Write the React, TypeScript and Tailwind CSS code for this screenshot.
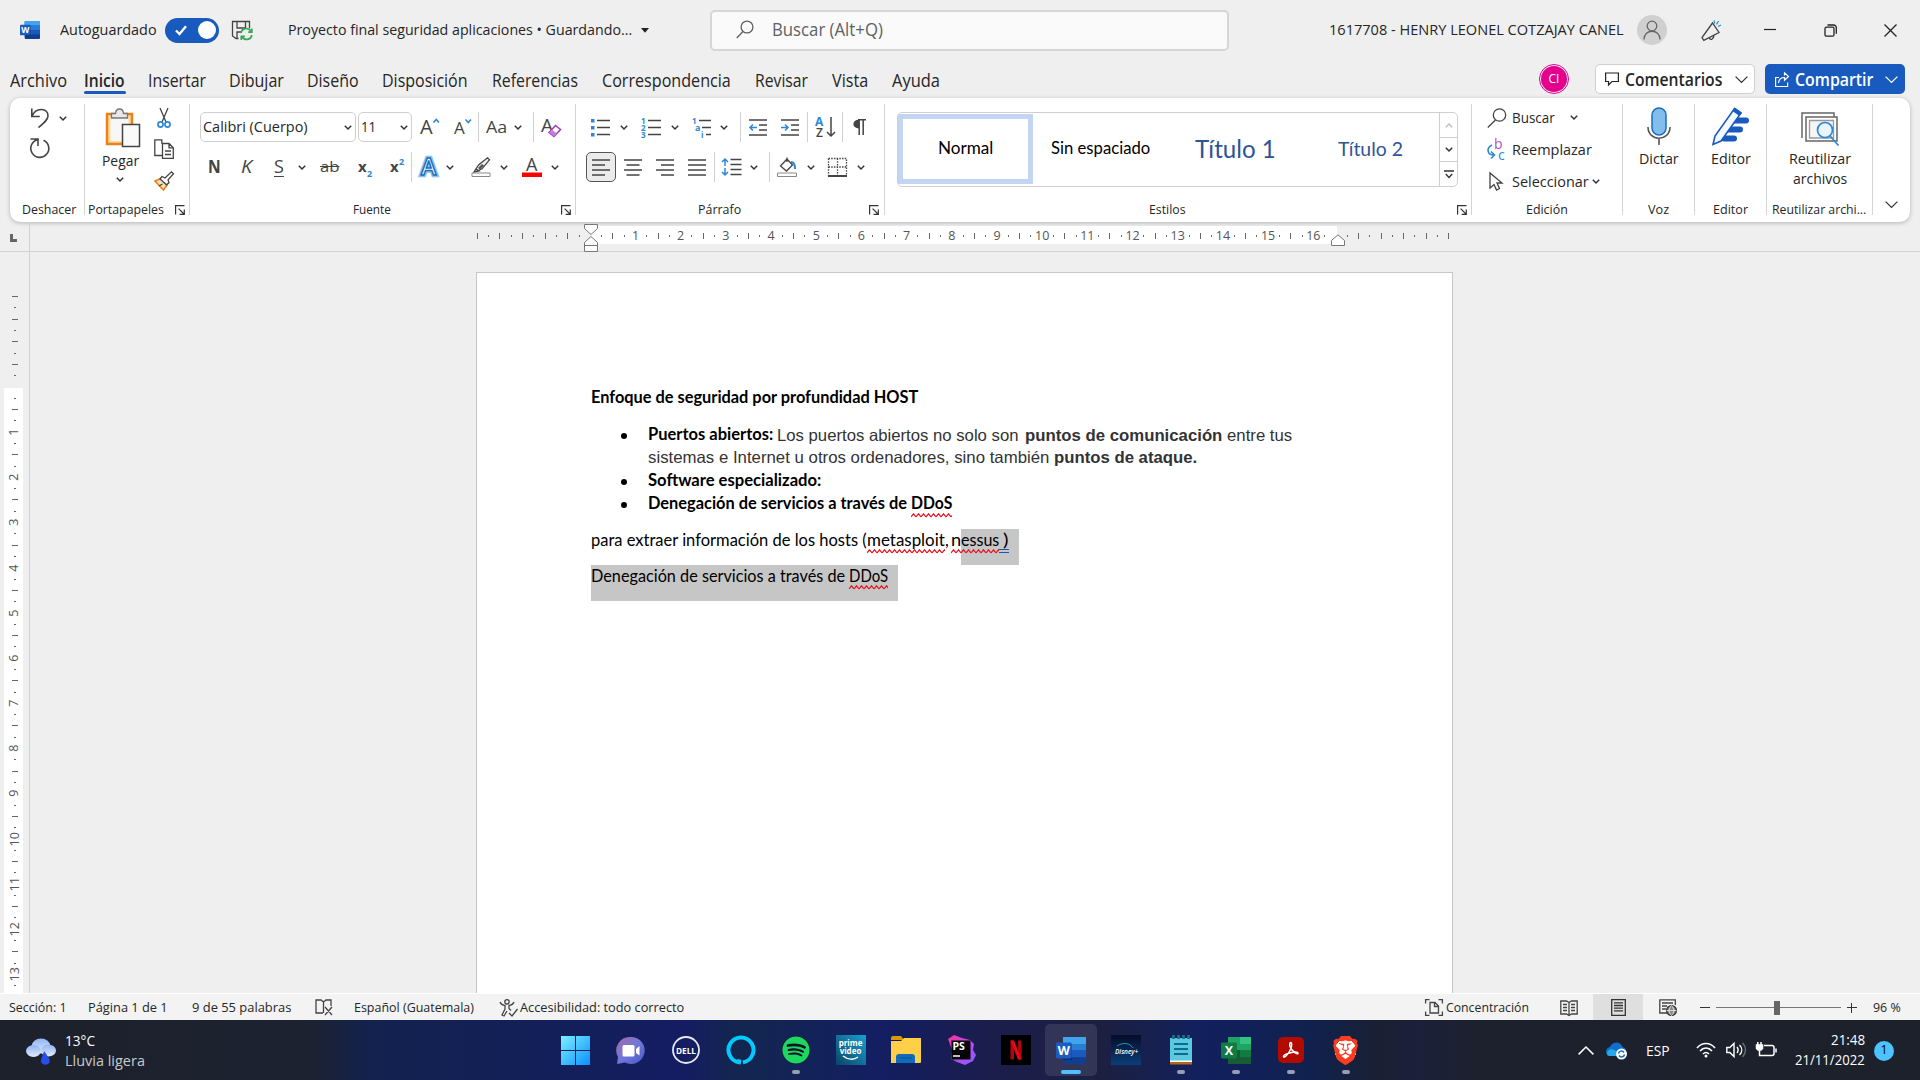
import React, { useLayoutEffect, useRef, useState } from "react";
import { FaSpotify } from "react-icons/fa";
import { SiBrave } from "react-icons/si";

type Kids = { children?: React.ReactNode };

/* One line of text, condensed or widened to fill the width its class gives. */
function T({ c, children }: { c: string } & Kids) {
  const box = useRef<HTMLSpanElement>(null);
  const inner = useRef<HTMLSpanElement>(null);
  const [k, setK] = useState(1);
  useLayoutEffect(() => {
    if (box.current && inner.current && inner.current.offsetWidth > 0) {
      const r = box.current.getBoundingClientRect().width / inner.current.offsetWidth;
      setK(r);
    }
  }, []);
  return (
    <span ref={box} className={"inline-flex shrink-0 items-center whitespace-pre leading-[1.3] " + c}>
      <span ref={inner} className="inline-block shrink-0 origin-left" style={{ transform: `scaleX(${k})` }}>
        {children}
      </span>
    </span>
  );
}

function Ic({ w, h, c = "", s = "#444", sw = 1.3, children }: { w: number; h: number; c?: string; s?: string; sw?: number } & Kids) {
  return (
    <svg width={w} height={h} viewBox={`0 0 ${w} ${h}`} className={"shrink-0 overflow-visible " + c} fill="none" stroke={s} strokeWidth={sw}>
      {children}
    </svg>
  );
}

const Chev = ({ c = "", s = "#333" }: { c?: string; s?: string }) => (
  <Ic w={8} h={5} c={c} s={s} sw={1.5}><path d="M.8.7 4 4 7.2.7" /></Ic>
);
const BigChev = ({ c = "", s = "#333" }: { c?: string; s?: string }) => (
  <Ic w={13} h={7} c={c} s={s} sw={1.3}><path d="M.6.6 6.5 6.4 12.4.6" /></Ic>
);
const Div = ({ c = "" }: { c?: string }) => <span className={"h-[30px] w-px shrink-0 bg-[#d0d0d0] " + c} />;
const Launcher = ({ c = "" }: { c?: string }) => (
  <Ic w={10} h={10} c={c} s="#333" sw={1.2}><path d="M.6 9.5V.6H9.5M3.6 3.6l5.4 5.4M9.3 4.6v4.8H4.6" /></Ic>
);

function Group({ c, label, lc, lt, launcher, children }: { c: string; label: string; lc: string; lt?: string; launcher?: string } & Kids) {
  return (
    <section className={"flex h-[111px] shrink-0 flex-col border-r border-[#d4d4d4] " + c}>
      <div className="h-[101px]">{children}</div>
      <div className="flex h-[10px] items-center">
        <T c={"text-[13.3px] " + lc + " " + (lt ?? "")}>{label}</T>
        {launcher && <Launcher c={launcher} />}
      </div>
    </section>
  );
}

const WordLogo = ({ size }: { size: number }) => (
  <svg width={size} height={size * 0.9} viewBox="0 0 30 27" className="shrink-0">
    <rect x="7" y="0" width="23" height="27" rx="1.5" fill="#103f91" />
    <path d="M7 0h23v7H7z" fill="#41a5ee" /><path d="M7 7h23v6.6H7z" fill="#2b7cd3" /><path d="M7 13.6h23v6.6H7z" fill="#185abd" />
    <path d="M7 6h9v17H7z" fill="#000" opacity=".25" />
    <rect x="0" y="5.5" width="15.5" height="16" rx="1.4" fill="#1b5cbe" />
    <text x="7.8" y="18" textAnchor="middle" fontSize="12.5" fontWeight="700" fill="#fff" fontFamily="Open Sans, sans-serif">W</text>
  </svg>
);

function TitleBar() {
  return (
    <header className="flex h-[60px] shrink-0 items-center text-[15px]">
      <span className="ml-5 flex"><WordLogo size={20} /></span>
      <T c="ml-5 w-[97px]">Autoguardado</T>
      <span className="ml-2 flex h-[25px] w-[54px] items-center justify-between rounded-full bg-[#185abd] pl-2.5 pr-[3px]">
        <Ic w={12} h={11} s="#fff" sw={2.3}><path d="M1 5.5 4.5 9 11 1.2" /></Ic>
        <i className="size-[18px] rounded-full bg-white" />
      </span>
      <Ic w={22} h={21} c="ml-3">
        <path d="M7.5 18.5H5L1.5 16V1.5h17V8M6 1.5v6.500h8.500V1.500M6 18v-6h4" />
        <path d="M10 13a5.300 5.300 0 0 1 10-1.500M20.800 8.500v3.600h-3.600M20.800 15a5.300 5.300 0 0 1-9.800 1.800M10.300 20v-3.600h3.600" stroke="#36a853" strokeWidth="1.7" />
      </Ic>
      <T c="ml-[35px] w-[344px]">Proyecto final seguridad aplicaciones • Guardando...</T>
      <svg width="8" height="5" className="ml-[9px] shrink-0"><path d="M0 0h8L4 4.800z" fill="#222" /></svg>
      <div className="ml-[61px] flex h-[41px] w-[519px] shrink-0 items-center rounded-[5px] border-2 border-[#d6d6d6] bg-[#fafafa] pb-[2px] text-[17.5px] text-[#616161]">
        <Ic w={18} h={19} c="ml-6" s="#616161"><circle cx="11" cy="7" r="5.900" /><path d="M7 11.500.8 18" /></Ic>
        <T c="ml-[18px] w-[111px]">Buscar (Alt+Q)</T>
      </div>
      <T c="ml-[100px] w-[295px]">1617708 - HENRY LEONEL COTZAJAY CANEL</T>
      <span className="ml-[13px] flex size-[30px] shrink-0 items-center justify-center rounded-full bg-[#d0d0d0]">
        <Ic w={18} h={20} s="#666"><circle cx="9" cy="6" r="4.800" /><path d="M1 19.500c0-11 16-11 16 0" /></Ic>
      </span>
      <Ic w={20} h={21} c="ml-[34px]">
        <path d="M11.500 3 1 17.500l1.800 2.800L18 12.500zM8.500 18c.5 2.300 4 2 4.500-2.600" />
        <path d="M13 .5l.8 3M17.500 1l-2 3.500M20 5l-3 1.500" stroke="#2b88d8" />
      </Ic>
      <Ic w={12} h={13} c="ml-[43px]" s="#222" sw={1.200}><path d="M0 5.500h12" /></Ic>
      <Ic w={13} h={13} c="ml-12" s="#222" sw={1.300}><rect x="1" y="3.200" width="9" height="9" rx="1.500" /><path d="M3.500 1h6a2.800 2.800 0 0 1 2.800 2.800v6" /></Ic>
      <Ic w={13} h={13} c="ml-[47px]" s="#222" sw={1.300}><path d="M.5.5l12 12M12.500.5l-12 12" /></Ic>
    </header>
  );
}

function Tabs() {
  return (
    <nav className="flex h-[38px] shrink-0 items-center text-[17.500px]">
      <T c="ml-[10px] mt-[2px] w-[57px]">Archivo</T>
      <span className="relative ml-[17px] mt-[2px] flex font-semibold">
        <T c="w-[41px]">Inicio</T>
        <i className="absolute -bottom-[3px] left-0 h-[3px] w-[42px] rounded-full bg-[#185abd]" />
      </span>
      <T c="ml-[23px] mt-[2px] w-[58px]">Insertar</T>
      <T c="ml-[23px] mt-[2px] w-[55px]">Dibujar</T>
      <T c="ml-[23px] mt-[2px] w-[52px]">Diseño</T>
      <T c="ml-[23px] mt-[2px] w-[86px]">Disposición</T>
      <T c="ml-[24px] mt-[2px] w-[86px]">Referencias</T>
      <T c="ml-[24px] mt-[2px] w-[129px]">Correspondencia</T>
      <T c="ml-[24px] mt-[2px] w-[53px]">Revisar</T>
      <T c="ml-[24px] mt-[2px] w-[36px]">Vista</T>
      <T c="ml-[24px] mt-[2px] w-[48px]">Ayuda</T>
      <span className="ml-[599px] flex size-[30px] shrink-0 items-center justify-center rounded-full border border-[#e3008c] p-px">
        <i className="flex size-full items-center justify-center rounded-full bg-[#e3008c] text-[12px] not-italic text-white">CI</i>
      </span>
      <div className="ml-[26px] flex h-[30px] w-[160px] shrink-0 items-center rounded-[5px] border border-[#cfcfcf] bg-white font-semibold">
        <Ic w={14} h={14} c="ml-[9px]" s="#222" sw={1.200}><path d="M.6 1h12.800v8.500H7L3.500 13V9.500H.6z" /></Ic>
        <T c="ml-[6px] w-[97px]">Comentarios</T>
        <BigChev c="ml-[13px]" />
      </div>
      <div className="ml-[10px] flex h-[30px] w-[140px] shrink-0 items-center rounded-[5px] bg-[#185abd] font-semibold text-white">
        <Ic w={14} h={15} c="ml-[10px]" s="#fff" sw={1.200}><path d="M4 5.500H.6v9h12v-4M3.500 11c.5-4 3-5.500 6-5.500V8.300L13.500 4.500 9.500.8v2.700" /></Ic>
        <T c="ml-[6px] w-[78px]">Compartir</T>
        <BigChev c="ml-[12px]" s="#fff" />
      </div>
    </nav>
  );
}

const aText = (x: number, y: number, size: number, t: string, fill: string, extra: object = {}) => (
  <text x={x} y={y} fontSize={size} fill={fill} stroke="none" fontFamily="Open Sans, sans-serif" {...extra}>{t}</text>
);

function Ribbon() {
  return (
    <div className="mx-[10px] flex h-[124px] shrink-0 rounded-[10px] bg-white pt-[6px] shadow-[0_1px_4px_rgba(0,0,0,0.25)]">
      <Group c="w-[75px]" label="Deshacer" lc="ml-[12px] w-[54px]">
        <div className="flex flex-col pt-[2px]">
          <div className="flex h-6 items-center">
            <Ic w={18} h={20} c="ml-[21px]" sw={1.600}><path d="M.8.5v8h8M1 8.300C5-1.500 17.500 0 17 8c-.2 4-4 7-9.500 11.500" /></Ic>
            <Chev c="ml-[10px]" />
          </div>
          <Ic w={20} h={21} c="ml-[20px] mt-[8px]" sw={1.600}><path d="M.5 1H8v7M13.500 2.200a9 9 0 1 1-6-.5" /></Ic>
        </div>
      </Group>
      <Group c="w-[105px]" label="Portapapeles" lc="ml-[3px] w-[76px]" launcher="ml-[11px]">
        <div className="flex pt-[4px]">
          <div className="ml-[15px] flex w-[40px] flex-col items-center">
            <Ic w={35} h={39} c="ml-[4px]">
              <path d="M2 6h25v30H2z" fill="#fbd993" stroke="#e8821e" strokeWidth="2.500" />
              <path d="M5.500 9h18v24h-18z" fill="#f7f7f7" stroke="none" />
              <path d="M6.500 10V5.500h4C11-.5 18-.5 18.500 5.500h4V10z" fill="#e8e8e8" stroke="#777" />
              <path d="M17.500 16.500h17v22h-17z" fill="#fafafa" stroke="#444" strokeWidth="1.500" />
            </Ic>
            <T c="mt-[4px] w-[37px] text-[15px]">Pegar</T>
            <Chev c="mt-[6px]" />
          </div>
          <div className="ml-[14px] flex flex-col items-center">
            <Ic w={14} h={20}><path d="M3 0l6 14M11 0 5 14" /><circle cx="3.500" cy="16.500" r="2.600" stroke="#2b88d8" strokeWidth="1.600" /><circle cx="10.500" cy="16.500" r="2.600" stroke="#2b88d8" strokeWidth="1.600" /></Ic>
            <Ic w={20} h={20} c="mt-[11px]"><path d="M8.500 16.500H.8V.8h7v4" fill="none" /><path d="M8.500 4.500h6.500l4.300 4.300v10.500H8.500zM15 4.500v4.300h4.300M11 12h6M11 15.500h6" /></Ic>
            <Ic w={20} h={20} c="mt-[12px]"><path d="M1 10l6-2.500 6 6.500L9.500 19z" fill="#fde3b8" stroke="#e8821e" strokeWidth="1.600" /><path d="M5 15l3.500-2M6 8l2-2.500 3 1.500L17.500.8l2 2-5.500 6 1 3-2.500 2z" fill="#fff" stroke="#444" /></Ic>
          </div>
        </div>
      </Group>

      <Group c="w-[386px]" label="Fuente" lc="ml-[163px] w-[38px]" launcher="ml-[170px]">
        <div className="flex flex-col gap-[10px] pt-[8px]">
          <div className="flex h-[30px] items-center text-[15px]">
            <span className="ml-[10px] flex h-[30px] w-[156px] shrink-0 items-center rounded-[5px] border border-[#cfcfcf]">
              <T c="ml-[2px] w-[105px]">Calibri (Cuerpo)</T><Chev c="ml-[36px]" />
            </span>
            <span className="ml-[2px] flex h-[30px] w-[54px] shrink-0 items-center rounded-[5px] border border-[#cfcfcf]">
              <T c="ml-[2px] w-[15px]">11</T><Chev c="ml-[24px]" />
            </span>
            <Ic w={20} h={20} c="ml-[8px]">{aText(0, 17, 20, "A", "#444")}<path d="M13.500 5.500 16.300 2.500 19 5.500" stroke="#2b88d8" strokeWidth="1.600" /></Ic>
            <Ic w={18} h={20} c="ml-[14px]">{aText(0, 17, 17, "A", "#444")}<path d="M11.500 2.500 14.300 5.500 17 2.500" stroke="#2b88d8" strokeWidth="1.600" /></Ic>
            <Div c="ml-[6px]" />
            <T c="ml-[7px] w-[21px] text-[17px] text-[#444]">Aa</T>
            <Chev c="ml-[7px]" />
            <Div c="ml-[11px]" />
            <Ic w={20} h={20} c="ml-[7px]">{aText(0, 15, 19, "A", "#444")}<path d="M8 15.500 14.500 8.500l5 4-6.500 7z" fill="#fff" stroke="#9b3fb5" strokeWidth="1.600" /><path d="M8 15.500l3-3 4.700 4-2.700 3z" fill="#c77ddb" stroke="none" /></Ic>
          </div>
          <div className="flex h-[30px] items-center text-[#444]">
            <T c="ml-[18px] w-[13px] text-[18px] font-bold">N</T>
            <T c="ml-[20px] w-[11px] text-[18px] italic">K</T>
            <T c="ml-[22px] w-[10px] text-[18px] underline underline-offset-3 decoration-1">S</T>
            <Chev c="ml-[14px]" />
            <T c="ml-[14px] w-[20px] text-[15px] line-through">ab</T>
            <Ic w={14} h={22} c="ml-[18px]">{aText(0, 16, 15, "x", "#444", { fontWeight: 700 })}{aText(9, 21, 9, "2", "#2b88d8", { fontWeight: 700 })}</Ic>
            <Ic w={14} h={22} c="ml-[18px]">{aText(0, 16, 15, "x", "#444", { fontWeight: 700 })}{aText(9, 9, 9, "2", "#2b88d8", { fontWeight: 700 })}</Ic>
            <Div c="ml-[7px]" />
            <Ic w={19} h={20} c="ml-[8px]">{aText(1, 18, 23, "A", "#fff", { fontWeight: 600, stroke: "#8cc2ee", strokeWidth: 4.500 })}{aText(1, 18, 23, "A", "#fff", { fontWeight: 600, stroke: "#1a6fbf", strokeWidth: 1.500 })}</Ic>
            <Chev c="ml-[7px]" />
            <Ic w={20} h={20} c="ml-[17px]"><path d="M5 12l2.500-4L16.500.8l2 2-7.500 9-4 2zM5 12l3 2-5 1z" fill="#eee" /><path d="M7 11l4-4 2 1.500-4 4z" fill="#555" stroke="none" /><path d="M1 16h18v3.500H1z" stroke="#888" strokeWidth="1" fill="#fff" /></Ic>
            <Chev c="ml-[9px]" />
            <Ic w={20} h={20} c="ml-[14px]">{aText(4, 13.500, 18, "A", "#444")}<path d="M0 15.500h20v4.500H0z" fill="#f00" stroke="none" /></Ic>
            <Chev c="ml-[9px]" />
          </div>
        </div>
      </Group>

      <Group c="w-[309px]" label="Párrafo" lc="ml-[122px] w-[43px]" launcher="ml-[128px]">
        <div className="flex flex-col gap-[10px] pt-[8px]">
          <div className="flex h-[30px] items-center">
            <Ic w={20} h={19} c="ml-[14px]" sw={1.500}><path d="M7 2.500h13M7 9.500h13M7 16.500h13" /><path d="M1 1h3.500v3.500H1zM1 8h3.500v3.500H1zM1 15h3.500v3.500H1z" fill="#2b88d8" stroke="none" /></Ic>
            <Chev c="ml-[10px]" />
            <Ic w={20} h={19} c="ml-[13px]" sw={1.500}><path d="M7 2.500h13M7 9.500h13M7 16.500h13" />{aText(0, 5.500, 8, "1", "#2b88d8", { fontWeight: 700 })}{aText(0, 12.500, 8, "2", "#2b88d8", { fontWeight: 700 })}{aText(0, 19.500, 8, "3", "#2b88d8", { fontWeight: 700 })}</Ic>
            <Chev c="ml-[10px]" />
            <Ic w={20} h={19} c="ml-[13px]" sw={1.500}><path d="M7 2.500h12M10 9.500h9M14 16.500h5" />{aText(0, 5.500, 8, "1", "#2b88d8", { fontWeight: 700 })}{aText(3, 12.500, 9, "a", "#2b88d8", { fontWeight: 700 })}{aText(9, 19.500, 8, "i", "#2b88d8", { fontWeight: 700 })}</Ic>
            <Chev c="ml-[8px]" />
            <Div c="ml-[12px]" />
            <Ic w={18} h={17} c="ml-[8px]" sw={1.500}><path d="M0 1h18M10 6h8M10 11h8M0 16h18" /><path d="M8 8.500H1M4 5.500l-3 3 3 3" stroke="#2b88d8" /></Ic>
            <Ic w={18} h={17} c="ml-[14px]" sw={1.500}><path d="M0 1h18M10 6h8M10 11h8M0 16h18" /><path d="M0 8.500h7M4 5.500l3 3-3 3" stroke="#2b88d8" /></Ic>
            <Div c="ml-[8px]" />
            <Ic w={21} h={20} c="ml-[7px]" sw={1.500}>{aText(0, 8.500, 12, "A", "#2b88d8", { fontWeight: 700 })}{aText(1, 20, 12, "Z", "#444", { fontWeight: 600 })}<path d="M16 0v19M12 15l4 4 4-4" /></Ic>
            <Div c="ml-[6px]" />
            <Ic w={13} h={17} c="ml-[10px]" sw={1.500}><path d="M6 9.500C-1.500 9.500-1.500.8 6 .8z" fill="#444" stroke="none" /><path d="M5 .8h8M6.200.8V16M10.200.8V16" /></Ic>
          </div>
          <div className="flex h-[30px] items-center">
            <span className="ml-[10px] flex size-[30px] shrink-0 items-center justify-center rounded-[5px] border border-[#555] bg-[#ebebeb]">
              <Ic w={18} h={17} sw={1.500}><path d="M0 1h18M0 6h13M0 11h18M0 16h13" /></Ic>
            </span>
            <Ic w={18} h={17} c="ml-[8px]" sw={1.500}><path d="M0 1h18M2.500 6h13M0 11h18M2.500 16h13" /></Ic>
            <Ic w={18} h={17} c="ml-[14px]" sw={1.500}><path d="M0 1h18M5 6h13M0 11h18M5 16h13" /></Ic>
            <Ic w={18} h={17} c="ml-[14px]" sw={1.500}><path d="M0 1h18M0 6h18M0 11h18M0 16h18" /></Ic>
            <Div c="ml-[8px]" />
            <Ic w={21} h={18} c="ml-[6px]" sw={1.500}><path d="M9.500 1.500h11M9.500 6.500h11M9.500 11.500h11M9.500 16.500h11" /><path d="M4 1v7M1 4l3-3 3 3M4 10v7M1 14l3 3 3-3" stroke="#2b88d8" /></Ic>
            <Chev c="ml-[8px]" />
            <Div c="ml-[11px]" />
            <Ic w={20} h={20} c="ml-[7px]"><path d="M3.500 9 10 2l5.500 6-6 6zM10 5V.5" fill="#fff" /><path d="M14 5c3 0 4 3 4 7" stroke="#2b88d8" strokeWidth="2" /><path d="M.5 16h19v3.500H.5z" stroke="#888" strokeWidth="1" /></Ic>
            <Chev c="ml-[10px]" />
            <Ic w={19} h={19} c="ml-[13px]"><path d="M.5.5h18v17M.5.5v17M9.500.5v17M.5 9h18" strokeDasharray="1.500 1.200" /><path d="M0 18h19" strokeWidth="2" /></Ic>
            <Chev c="ml-[10px]" />
          </div>
        </div>
      </Group>

      <Group c="w-[587px]" label="Estilos" lc="ml-[264px] w-[37px]" launcher="ml-[271px]">
        <div className="ml-[12px] mt-[8px] flex h-[75px] w-[561px] rounded-[5px] border border-[#cfcfcf] font-['Lato'] text-black">
          <div className="mt-px flex h-[70px] w-[135px] items-center justify-center border-[5px] border-[#c4d5f3]"><T c="w-[55px] text-[16.500px]">Normal</T></div>
          <div className="flex w-[135px] items-center justify-center pb-px"><T c="w-[99px] text-[16.500px]">Sin espaciado</T></div>
          <div className="flex w-[135px] items-center justify-center pb-[3px] pr-px text-[#2f5496]"><T c="w-[81px] text-[25px]">Título 1</T></div>
          <div className="flex w-[135px] items-center justify-center pb-[3px] pr-px text-[#2f5496]"><T c="w-[65px] text-[20px]">Título 2</T></div>
          <div className="ml-auto flex w-[18px] flex-col border-l border-[#cfcfcf]">
            <span className="flex h-[25px] items-center justify-center border-b border-[#cfcfcf]"><Ic w={8} h={5} s="#bbb"><path d="M.8 4.300 4 1l3.200 3.300" /></Ic></span>
            <span className="flex h-6 items-center justify-center border-b border-[#cfcfcf]"><Chev /></span>
            <span className="flex h-6 items-center justify-center"><Ic w={10} h={9} s="#333" sw={1.400}><path d="M0 1h10M1.800 4 5 7.500 8.200 4" /></Ic></span>
          </div>
        </div>
      </Group>

      <Group c="w-[151px]" label="Edición" lc="ml-[54px] w-[42px]">
        <div className="flex flex-col text-[15px]">
          <div className="flex h-[27px] items-center">
            <Ic w={20} h={20} c="ml-[15px]"><circle cx="12.500" cy="7" r="6.200" /><path d="M8.500 12 .8 19.500" /></Ic>
            <T c="ml-[5px] w-[43px]">Buscar</T><Chev c="ml-[15px]" />
          </div>
          <div className="flex h-[37px] items-center">
            <Ic w={18} h={20} c="ml-[15px]" sw={1.600}>{aText(7, 9, 14, "b", "#b14ec4")}{aText(11, 20, 14, "c", "#2b88d8")}<path d="M5 5C-1 8 0 15 7 15M4 11.500 7.500 15 4 18.500" stroke="#2b88d8" /></Ic>
            <T c="ml-[7px] w-[80px]">Reemplazar</T>
          </div>
          <div className="flex h-[27px] items-center">
            <Ic w={14} h={19} c="ml-[17px]"><path d="M1 1v15l4-3.500L7.500 18l3-1.500L8 11h5z" /></Ic>
            <T c="ml-[9px] w-[77px]">Seleccionar</T><Chev c="ml-[3px]" />
          </div>
        </div>
      </Group>

      <Group c="w-[72px]" label="Voz" lc="ml-[25px] w-[21px]">
        <div className="flex flex-col items-center pt-[3px]">
          <Ic w={24} h={38}><rect x="5" y="1" width="14" height="27" rx="7" fill="#83bdeb" stroke="#1a6fbf" strokeWidth="1.500" /><path d="M1 20c0 15 22 15 22 0M12 31.500V38" stroke="#555" strokeWidth="1.600" /></Ic>
          <T c="mt-[4px] w-[40px] text-[15px]">Dictar</T>
        </div>
      </Group>
      <Group c="w-[72px]" label="Editor" lc="ml-[18px] w-[35px]">
        <div className="flex flex-col items-center pt-[3px]">
          <Ic w={38} h={38}>
            <path d="M20 13.500h14M15 22.500h13M12 31.500h10" stroke="#185abd" strokeWidth="6" strokeLinecap="round" />
            <path d="M22.500 1.500l6.500 4.500L9 34 1 37.500 3 29z" fill="#f4f8ff" stroke="#185abd" strokeWidth="1.600" />
            <path d="M20.500 4 23 .8l7 5L27.500 9z" fill="#185abd" stroke="none" />
          </Ic>
          <T c="mt-[4px] w-[40px] text-[15px]">Editor</T>
        </div>
      </Group>
      <Group c="w-[106px]" label="Reutilizar archi..." lc="ml-[5px] w-[94px]">
        <div className="flex flex-col items-center pt-[8px]">
          <Ic w={38} h={34}>
            <path d="M1 26V1h32v4M5 29V5h31v24z" stroke="#666" strokeWidth="1.500" /><path d="M8.500 8.500h24V26h-24z" fill="#f5f5f5" stroke="#999" />
            <circle cx="24" cy="18" r="7.500" fill="#eaf4fd" stroke="#2b88d8" strokeWidth="1.700" /><path d="M29 24l8.500 9.500" stroke="#2b88d8" strokeWidth="1.700" />
          </Ic>
          <T c="mt-[3px] w-[62px] text-[15px]">Reutilizar</T>
          <T c="w-[54px] text-[15px]">archivos</T>
        </div>
      </Group>
      <BigChev c="ml-[12px] mt-[97px]" />
    </div>
  );
}

const quarter = (from: number, count: number) => Array.from({ length: count }, (_, i) => from + i);

function HRuler() {
  return (
    <div className="flex h-[30px] shrink-0 border-b border-[#d2d2d2]">
      <div className="w-[30px] shrink-0 border-r border-[#d2d2d2] pl-[10px] pt-[12px]">
        <i className="block h-[8px] w-[7px] border-b-[3px] border-l-[3px] border-[#666]" />
      </div>
      <div className="relative mt-[4px] h-[18px] w-full">
        <i className="absolute left-[561px] top-0 h-full w-[746px] bg-white" />
        <div className="relative ml-[441.700px] flex h-full items-center pt-[2px] text-[12.500px] text-[#555]">
          {quarter(-10, 87).map((q) => (
            <span key={q} className="flex h-full w-[11.300px] shrink-0 items-center justify-center">
              {q > 0 && q < 66 && q % 4 === 0 ? <b className="font-normal leading-none">{q / 4}</b>
                : q === 0 || q === 66 ? null
                : q % 2 === 0 ? <i className="h-[6px] w-px bg-[#666]" /> : <i className="h-[2px] w-px bg-[#666]" />}
            </span>
          ))}
        </div>
        <svg width="14" height="28" className="absolute left-[554px] -top-[2px]" fill="#fff" stroke="#777">
          <path d="M.5.500h13v4L7 10.500.5 4.500zM.500 27.500v-9L7 12.500l6.500 6v9zM.500 21.500h13" />
        </svg>
        <svg width="14" height="12" className="absolute left-[1301px] top-[8px]" fill="#fff" stroke="#777">
          <path d="M.5 11.500v-5L7 .8l6.500 5.700v5z" />
        </svg>
      </div>
    </div>
  );
}

function VRuler() {
  return (
    <div className="relative h-full w-[30px] shrink-0 overflow-hidden border-r border-[#d2d2d2]">
      <i className="absolute left-[4px] top-[136px] h-[605px] w-[19px] bg-white" />
      <div className="relative ml-[4px] flex w-[22px] flex-col pt-[39px] text-[12.500px] text-[#555]">
        {quarter(-8, 62).map((q) => (
          <span key={q} className="flex h-[11.300px] w-full shrink-0 items-center justify-center">
            {q > 0 && q % 4 === 0 ? <b className="-rotate-90 font-normal leading-none">{q / 4}</b>
              : q === 0 ? null
              : q % 2 === 0 ? <i className="h-px w-[6px] bg-[#666]" /> : <i className="h-px w-[2px] bg-[#666]" />}
          </span>
        ))}
      </div>
    </div>
  );
}

const Misspelt = ({ c, children }: { c: string } & Kids) => (
  <span className="relative flex">
    <T c={c}>{children}</T>
    <svg className="absolute bottom-[-3px] left-0 h-[5px] w-full">
      <defs><pattern id="zig" width="5" height="5" patternUnits="userSpaceOnUse"><path d="M0 4 2.500.8 5 4" fill="none" stroke="#e8121d" strokeWidth="1.200" /></pattern></defs>
      <rect width="100%" height="5" fill="url(#zig)" />
    </svg>
  </span>
);

const Bullet = () => <i className="ml-[30px] mr-[21px] mt-[2px] size-[6px] shrink-0 rounded-full bg-black" />;

function Page() {
  return (
    <article className="ml-[446px] mt-[20px] w-[977px] border border-b-0 border-[#c6c6c6] bg-white pl-[114px] pt-[113px] font-['Lato'] text-[16.500px] text-black">
      <h1 className="flex h-6 items-center font-bold"><T c="w-[327px]">Enfoque de seguridad por profundidad HOST</T></h1>
      <div className="mt-[13px] flex h-6 items-center">
        <Bullet /><T c="w-[125px] font-bold">Puertos abiertos:</T>
        <span className="flex pt-[2px] font-['Liberation_Sans'] text-[16.500px] text-[#333]">
          <T c="ml-[4px] w-[242px]">Los puertos abiertos no solo son</T>
          <T c="ml-[6px] w-[197px] font-bold">puntos de comunicación</T>
          <T c="ml-[5px] w-[65px]">entre tus</T>
        </span>
      </div>
      <div className="flex h-[22px] items-center pl-[57px] font-['Liberation_Sans'] text-[16.500px] text-[#333]">
        <T c="w-[401px]">sistemas e Internet u otros ordenadores, sino también</T>
        <T c="ml-[5px] w-[143px] font-bold">puntos de ataque.</T>
      </div>
      <div className="flex h-[23px] items-center font-bold"><Bullet /><T c="w-[173px]">Software especializado:</T></div>
      <div className="flex h-6 items-center font-bold">
        <Bullet /><T c="w-[259px]">Denegación de servicios a través de</T><span className="w-[4px]" /><Misspelt c="w-[41px]">DDoS</Misspelt>
      </div>
      <div className="mt-[13px] flex h-9">
        <div className="flex h-[23px] items-center">
          <T c="w-[276px]">para extraer información de los hosts (</T>
          <Misspelt c="w-[78px]">metasploit</Misspelt>
          <T c="mr-[2px] w-[4px]">,</T>
          <Misspelt c="w-[10px]">n</Misspelt>
        </div>
        <div className="h-9 w-[58px] bg-[#c6c6c6]">
          <div className="flex h-[23px] items-center">
            <Misspelt c="w-[38px]">essus</Misspelt>
            <span className="relative ml-[4px] flex"><T c="w-[5px]">)</T><i className="absolute -bottom-[2px] -left-[4px] h-[4px] w-[10px] border-y border-[#1f55b5]" /></span>
          </div>
        </div>
      </div>
      <div className="h-9 w-[307px] bg-[#c6c6c6]">
        <div className="flex h-[23px] items-center">
          <T c="mr-[4px] w-[254px]">Denegación de servicios a través de</T><Misspelt c="w-[39px]">DDoS</Misspelt>
        </div>
      </div>
    </article>
  );
}

function StatusBar() {
  return (
    <footer className="flex h-[27px] shrink-0 items-center border-t border-white bg-[#f3f3f3] pt-px text-[13.300px]">
      <T c="ml-[9px] w-[58px]">Sección: 1</T>
      <T c="ml-[21px] w-[80px]">Página 1 de 1</T>
      <T c="ml-[24px] w-[99px]">9 de 55 palabras</T>
      <Ic w={18} h={17} c="ml-[24px]"><path d="M8 14H1V1h5l2.500 2v11M8.500 3 11 1h5v6M10 8l7 8M17 8l-7 8" /></Ic>
      <T c="ml-[21px] w-[120px]">Español (Guatemala)</T>
      <Ic w={19} h={18} c="ml-[25px]"><circle cx="8" cy="2.800" r="2.200" /><path d="M1 3c1 3 3 3 5 3.500V10l-3 6 2 1 3-5M15 3c-1 3-3 3-5 3.500v3l2 2M10 14l3 3 5.500-7" /></Ic>
      <T c="ml-[2px] w-[164px]">Accesibilidad: todo correcto</T>
      <Ic w={18} h={17} c="ml-[741px]"><path d="M4.500.6H.6v4M13.500.6h3.900v4M4.500 16.400H.6v-4M13.500 16.400h3.900v-4M5 3.500h5l3.500 3.500v7H5zM9.500 3.500V7.500h4" /></Ic>
      <T c="ml-[3px] w-[83px]">Concentración</T>
      <Ic w={18} h={16} c="ml-[31px]"><path d="M9 2.500 6.500 1H.8v13h5.700L9 15.500l2.500-1.500h5.700V1h-5.700zM9 2.500v13M3 4.500h4M3 7.500h4M3 10.500h4M11 4.500h4M11 7.500h4M11 10.500h4" /></Ic>
      <span className="-mt-px ml-[15px] flex h-[26px] w-[50px] shrink-0 items-center justify-center bg-[#dfdfdf]">
        <Ic w={15} h={17} s="#333"><path d="M.7.7h13.600v15.600H.7zM3 3.800h9M3 6.500h9M3 9.200h9M3 11.900h9" /></Ic>
      </span>
      <Ic w={19} h={17} c="ml-[16px]"><path d="M8 14H.8V.8h15.500V6M3 4h11M3 7h5M3 10h4" /><circle cx="12.500" cy="11.500" r="4.900" fill="#888" stroke="#333" /><path d="M7.500 11.500h10M12.500 6.500c-3 3-3 7 0 10 3-3 3-7 0-10" stroke="#eee" strokeWidth=".8" /></Ic>
      <i className="ml-[22px] h-px w-[10px] shrink-0 bg-[#333]" />
      <span className="ml-[6px] flex w-[125px] shrink-0 items-center"><i className="h-px w-[58px] bg-[#777]" /><i className="h-[14px] w-[6px] bg-[#666]" /><i className="h-px w-[61px] bg-[#777]" /></span>
      <Ic w={10} h={10} c="ml-[6px]" s="#333" sw={1}><path d="M0 4.500h10M4.500 0v10" /></Ic>
      <T c="ml-[16px] w-[28px]">96 %</T>
    </footer>
  );
}

function App({ on, open, children }: { on?: boolean; open?: boolean } & Kids) {
  return (
    <div className="flex w-[55px] shrink-0 justify-center">
      <div className={"relative flex size-[50px] items-center justify-center rounded-[4px] " + (on ? "bg-white/10 ring-1 ring-white/10" : "")}>
        {children}
        {open && <i className="absolute bottom-px h-[4px] w-[8px] rounded-full bg-[#9a9db0]" />}
        {on && <i className="absolute bottom-px h-[4px] w-[20px] rounded-full bg-[#4cc2ff]" />}
      </div>
    </div>
  );
}

function Taskbar() {
  return (
    <div className="flex h-[60px] shrink-0 items-center bg-[linear-gradient(90deg,#1c212b_0,#1c2230_310px,#13224f_370px,#131f5c_600px,#151c63_680px,#13264f_735px,#131f62_880px,#1b1d4c_990px,#1c2040_1100px,#12205e_1200px,#10214f_1310px,#1a2032_1380px,#1b1f3a_1410px,#1c212e_1480px,#1c212b_1920px)] text-white">
      <Ic w={24} h={28} c="ml-[26px] mt-[4px]" s="none">
        <defs><linearGradient id="cl" x1="0" y1="0" x2="0" y2="1"><stop offset="0" stopColor="#8fb4f5" /><stop offset="1" stopColor="#e4ebfa" /></linearGradient></defs>
        <g transform="scale(1.250 1)"><circle cx="12" cy="8" r="7.500" fill="url(#cl)" /><circle cx="6" cy="13" r="6" fill="url(#cl)" /><circle cx="18" cy="12.500" r="6" fill="url(#cl)" /><path d="M14.500 13c-1.500 5-2.500 8-2.500 10 0 5 7 5 7 0 0-3-2.500-6-4.500-10z" fill="#2850e8" /></g>
      </Ic>
      <div className="ml-[15px] flex h-full w-[483px] shrink-0 flex-col pt-[11px] text-[15px] leading-none">
        <T c="h-[20px] w-[30px]">13°C</T>
        <T c="h-[20px] w-[80px] text-[#c8cad0]">Lluvia ligera</T>
      </div>
      <App><svg width="29" height="29"><defs><linearGradient id="wn" x1="0" y1="0" x2="1" y2="1"><stop stopColor="#7bf0ff" /><stop offset="1" stopColor="#0a90ff" /></linearGradient></defs><path d="M0 0h14v14H0zM15 0h14v14H15zM0 15h14v14H0zM15 15h14v14H15z" fill="url(#wn)" /></svg></App>
      <App><svg width="29" height="29"><defs><linearGradient id="ch" x1="0" y1="0" x2="1" y2="1"><stop stopColor="#a868a8" /><stop offset=".5" stopColor="#7078d8" /><stop offset="1" stopColor="#4858c8" /></linearGradient></defs><path d="M15 1a13.500 13.500 0 1 1-6 25.500L1 28l1-7A13.500 13.500 0 0 1 15 1z" fill="url(#ch)" /><rect x="6.500" y="9" width="12" height="11.500" rx="1.500" fill="#fff" /><path d="M20 13l3.500-3v9.500L20 17z" fill="#fff" /></svg></App>
      <App><svg width="28" height="28"><circle cx="14" cy="14" r="13" fill="none" stroke="#e8e8f0" strokeWidth="1.800" /><text x="14" y="17.500" textAnchor="middle" fontSize="9.500" fontWeight="700" textLength="20" lengthAdjust="spacingAndGlyphs" fill="#fff" fontFamily="Open Sans, sans-serif">DELL</text></svg></App>
      <App><svg width="30" height="30"><path d="M17 27.300a12.500 12.500 0 1 0-4 0l.5-3" fill="none" stroke="#00caff" strokeWidth="4" /></svg></App>
      <App open><span className="flex rounded-full bg-[#10142a]"><FaSpotify size={28} color="#1ed760" /></span></App>
      <App>
        <span className="flex size-[30px] flex-col items-center bg-[linear-gradient(45deg,#0c4468,#17a0cf)] pt-[4px] text-[8px] font-bold leading-[8px]">
          <i className="not-italic">prime</i><i className="not-italic">video</i>
          <svg width="18" height="5"><path d="M1 1c5 4 11 4 15 1" stroke="#fff" strokeWidth="1.500" fill="none" /></svg>
        </span>
      </App>
      <App><svg width="30" height="28"><path d="M0 2a2 2 0 0 1 2-2h8l3 4H0z" fill="#d89a00" /><path d="M0 5h10l3-3h17v24a1 1 0 0 1-1 1H0z" fill="#ffcf48" /><path d="M5 27v-6a3 3 0 0 1 3-3h13a3 3 0 0 1 3 3v6z" fill="#0f6cbd" /><path d="M9 22h12" stroke="#0b4f91" /></svg></App>
      <App><svg width="30" height="30"><defs><linearGradient id="ps" x1="0" y1="0" x2="1" y2="1"><stop stopColor="#ff318c" /><stop offset=".5" stopColor="#b74af7" /><stop offset="1" stopColor="#8a5cff" /></linearGradient></defs><path d="M2 4 8 0l8 3 8 2 4 4-1 6 3 5-3 6-8 4-8-3-6-3 1-9z" fill="url(#ps)" /><path d="M5.500 5.500h19v19h-19z" fill="#050505" /><text x="6.500" y="15" fontSize="10.500" fontWeight="700" fill="#fff" fontFamily="Open Sans, sans-serif">PS</text><path d="M7 21h7" stroke="#fff" strokeWidth="1.500" /></svg></App>
      <App><svg width="30" height="30"><path d="M0 0h30v30H0z" fill="#000" /><path d="M11.200 5.500v19M18.800 5.500v19" stroke="#b1060f" strokeWidth="3.400" /><path d="M9.500 5.500h3.500l7.500 19H17z" fill="#e50914" /></svg></App>
      <App on><WordLogo size={30} /></App>
      <App><svg width="30" height="30"><defs><linearGradient id="dn" x1="0" y1="0" x2="0" y2="1"><stop stopColor="#060c28" /><stop offset="1" stopColor="#0a3e78" /></linearGradient></defs><path d="M0 0h30v30H0z" fill="url(#dn)" /><path d="M6 11c6-4 13-3 16 2" stroke="#2bb5d8" fill="none" strokeWidth=".8" /><text x="4" y="18.500" fontSize="6.500" fontStyle="italic" fontWeight="600" fill="#fff" fontFamily="Open Sans, sans-serif">Disney+</text></svg></App>
      <App open><svg width="22" height="30"><path d="M0 3h22v24H0z" fill="#5cc8e0" /><path d="M0 26h22v3.500H0z" fill="#b5651d" /><path d="M0 25.500h22v1.500H0z" fill="#fff" /><path d="M4 9h14M4 14h14M4 19h14" stroke="#0a6c8e" strokeWidth="2" /><path d="M3.500 0v4M8.500 0v4M13.500 0v4M18.500 0v4" stroke="#16708f" strokeWidth="2.800" /></svg></App>
      <App open><svg width="30" height="27"><path d="M7 0h23v27H7z" fill="#185c37" /><path d="M7 0h12v13H7z" fill="#21a366" /><path d="M19 0h11v7H19z" fill="#33c481" /><path d="M19 7h11v6.500H19z" fill="#21a366" /><path d="M19 13.500h11v6.500H19z" fill="#107c41" /><rect y="5.500" width="16" height="16" rx="1.400" fill="#107c41" /><text x="8" y="18" textAnchor="middle" fontSize="12.500" fontWeight="700" fill="#fff" fontFamily="Open Sans, sans-serif">X</text></svg></App>
      <App open><svg width="26" height="26"><rect width="26" height="26" rx="5" fill="#b30b00" /><path d="M5.500 19.500c0-3 14-6 14.500-3.500.5 3-10-4-8-10 2.500-2.500 3 6-4 13-1 1-2.500 1.500-2.500.5z" fill="none" stroke="#fff" strokeWidth="1.500" /></svg></App>
      <App open><span className="flex rounded-full bg-[radial-gradient(circle,white_0_11px,transparent_11px)]"><SiBrave size={29} color="#fb3c1f" /></span></App>

      <Ic w={16} h={9} c="ml-[205px]" s="#fff" sw={1.500}><path d="M.6 8.400 8 1l7.400 7.400" /></Ic>
      <Ic w={22} h={18} c="ml-[12px] mt-[2px]" s="none"><path d="M5 14a4.500 4.500 0 0 1-1-9C6-1 15-1 16.500 5c5 1 4.500 8 0 9z" fill="#0f6fd0" /><path d="M1 12c0-6 8-6 10-1l3 3H4c-2 0-3-1-3-2z" fill="#28a8ea" /><circle cx="15.500" cy="12" r="5.500" fill="#fff" /><path d="M12.500 11.500a3 3 0 0 1 5.500-1M18.500 12.500a3 3 0 0 1-5.500 1" stroke="#0f6cbd" strokeWidth="1.500" /></Ic>
      <T c="ml-[18px] mt-[2px] w-[24px] text-[15px]">ESP</T>
      <Ic w={20} h={16} c="ml-[26px]" s="#fff" sw={1.600}><path d="M1 6c5-6 13-6 18 0M4 9c3.500-4 8.500-4 12 0M7 12c2-2 4-2 6 0" /><circle cx="10" cy="14" r="1.500" fill="#fff" stroke="none" /></Ic>
      <Ic w={20} h={16} c="ml-[10px]" s="#fff" sw={1.400}><path d="M.8 5.500h3L8 1.500v13l-4.200-4h-3zM11 5c1.500 2 1.500 4 0 6M13.500 3c3 3 3 7 0 10" /><path d="M16.500 1c4 4 4 10 0 14" opacity=".35" /></Ic>
      <Ic w={21} h={16} c="ml-[10px]" s="#fff" sw={1.500}><path d="M8 3.500h8a2 2 0 0 1 2 2v6a2 2 0 0 1-2 2H8M20 6.500v4M3.500 8v5.500H8" /><path d="M.5 3h6v3.500L5 8H2L.5 6.500zM1.800 0v3M5 0v3" fill="#fff" /></Ic>
      <div className="ml-[18px] flex h-full w-[70px] shrink-0 flex-col items-end pt-[10px] text-[15px]">
        <T c="h-[20px] w-[34px]">21:48</T>
        <T c="h-[20px] w-[70px]">21/11/2022</T>
      </div>
      <span className="ml-[9px] mt-[1px] flex size-[20px] shrink-0 items-center justify-center rounded-full bg-[#4cc2ff] text-[12.500px] text-black">1</span>
    </div>
  );
}

export default function Screen() {
  return (
    <main className="flex h-[1080px] w-[1920px] flex-col overflow-hidden bg-[#efefef] font-['Open_Sans',sans-serif] text-[#262626]">
      <TitleBar />
      <Tabs />
      <Ribbon />
      <HRuler />
      <div className="flex h-[741px] shrink-0">
        <VRuler />
        <Page />
      </div>
      <StatusBar />
      <Taskbar />
    </main>
  );
}
